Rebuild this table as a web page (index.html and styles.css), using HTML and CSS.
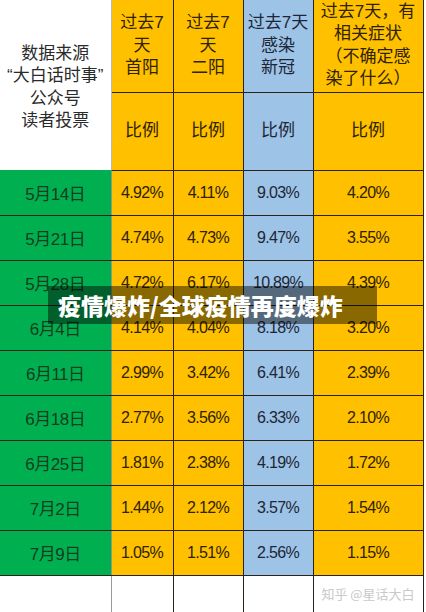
FILE: index.html
```html
<!DOCTYPE html>
<html lang="zh-CN">

<head>
  <meta charset="UTF-8">
  <meta name="viewport" content="width=device-width, initial-scale=1.0">
  <title>疫情爆炸/全球疫情再度爆炸</title>
  <link rel="stylesheet" href="styles.css">
</head>

<body>
  <div class="page">
    <table class="sheet">
      <colgroup>
        <col class="c-date">
        <col class="c-a">
        <col class="c-b">
        <col class="c-c">
        <col class="c-d">
      </colgroup>
      <thead>
        <tr class="head-top">
          <th class="src" rowspan="2">数据来源<br>“大白话时事”<br>公众号<br>读者投票</th>
          <th class="y">过去7<br>天<br>首阳</th>
          <th class="y">过去7<br>天<br>二阳</th>
          <th class="b">过去7天<br>感染<br>新冠</th>
          <th class="y">过去7天，有<br>相关症状<br>（不确定感<br>染了什么）</th>
        </tr>
        <tr class="head-sub">
          <th class="y">比例</th>
          <th class="y">比例</th>
          <th class="b">比例</th>
          <th class="y">比例</th>
        </tr>
      </thead>
      <tbody>
        <tr><td class="g">5月14日</td><td class="y">4.92%</td><td class="y">4.11%</td><td class="b">9.03%</td><td class="y">4.20%</td></tr>
        <tr><td class="g">5月21日</td><td class="y">4.74%</td><td class="y">4.73%</td><td class="b">9.47%</td><td class="y">3.55%</td></tr>
        <tr><td class="g">5月28日</td><td class="y">4.72%</td><td class="y">6.17%</td><td class="b">10.89%</td><td class="y">4.39%</td></tr>
        <tr><td class="g">6月4日</td><td class="y">4.14%</td><td class="y">4.04%</td><td class="b">8.18%</td><td class="y">3.20%</td></tr>
        <tr><td class="g">6月11日</td><td class="y">2.99%</td><td class="y">3.42%</td><td class="b">6.41%</td><td class="y">2.39%</td></tr>
        <tr><td class="g">6月18日</td><td class="y">2.77%</td><td class="y">3.56%</td><td class="b">6.33%</td><td class="y">2.10%</td></tr>
        <tr><td class="g">6月25日</td><td class="y">1.81%</td><td class="y">2.38%</td><td class="b">4.19%</td><td class="y">1.72%</td></tr>
        <tr><td class="g">7月2日</td><td class="y">1.44%</td><td class="y">2.12%</td><td class="b">3.57%</td><td class="y">1.54%</td></tr>
        <tr><td class="g">7月9日</td><td class="y">1.05%</td><td class="y">1.51%</td><td class="b">2.56%</td><td class="y">1.15%</td></tr>
        <tr class="blank">
          <td class="first"></td><td></td><td></td><td></td>
          <td class="mark">知乎 @星话大白</td>
        </tr>
      </tbody>
    </table>

    <!-- 标题条盖在表格上 -->
    <div class="caption">疫情爆炸/全球疫情再度爆炸</div>
  </div>
</body>

</html>
```

FILE: styles.css
```css
*,
html {
  margin: 0;
  padding: 0;
  box-sizing: border-box;
}

body {
  background: #fff;
  font-family: "Liberation Sans", "Noto Sans CJK SC", sans-serif;
  color: #222;
  overflow: hidden;
}

.page {
  position: relative;
  width: 426px;
  height: 612px;
}

.sheet {
  border-collapse: collapse;
  table-layout: fixed;
  width: 423px;
  font-size: 17px;
}

.c-date { width: 111px; }
.c-a { width: 62px; }
.c-b { width: 70px; }
.c-c { width: 70px; }
.c-d { width: 110px; }

th,
td {
  border: 1px solid #2a2218;
  text-align: center;
  vertical-align: middle;
  font-weight: normal;
  padding: 0;
}

thead th {
  line-height: 22.5px;
  border-top: none;
}

.head-top {
  height: 92px;
}

.head-sub {
  height: 78px;
}

tbody tr {
  height: 45px;
}

.src {
  background: #fff;
  color: #2a2a2a;
  border-left: none;
  border-right: 1px solid #b8b8b8;
  border-bottom: 1px solid #00b050;
  padding-top: 6px;
}

.y {
  background: #ffc000;
  color: #2e2200;
}

.b {
  background: #9dc3e6;
  color: #1d2636;
}

.g {
  background: #00b050;
  color: #163c20;
  border-left: none;
  border-right: 1px solid #8a9a88;
  letter-spacing: -0.5px;
}

tbody .y,
tbody .b {
  font-size: 16px;
  letter-spacing: -0.7px;
}

.blank {
  height: 37px;
}

.blank td {
  background: #fff;
  border-bottom: none;
}

.blank .first {
  border-left: none;
  border-right: 1px solid #9a9a9a;
}

.mark {
  font-family: "Noto Sans CJK SC", sans-serif;
  font-size: 13px;
  color: #c9c9c9;
  white-space: nowrap;
}

.caption {
  position: absolute;
  left: 48px;
  top: 286px;
  width: 329px;
  height: 38px;
  padding-left: 10px;
  background: rgba(0, 0, 0, 0.46);
  color: #fff;
  font-family: "Noto Sans CJK SC", sans-serif;
  font-weight: 900;
  font-size: 23px;
  line-height: 38px;
  white-space: nowrap;
}
```
